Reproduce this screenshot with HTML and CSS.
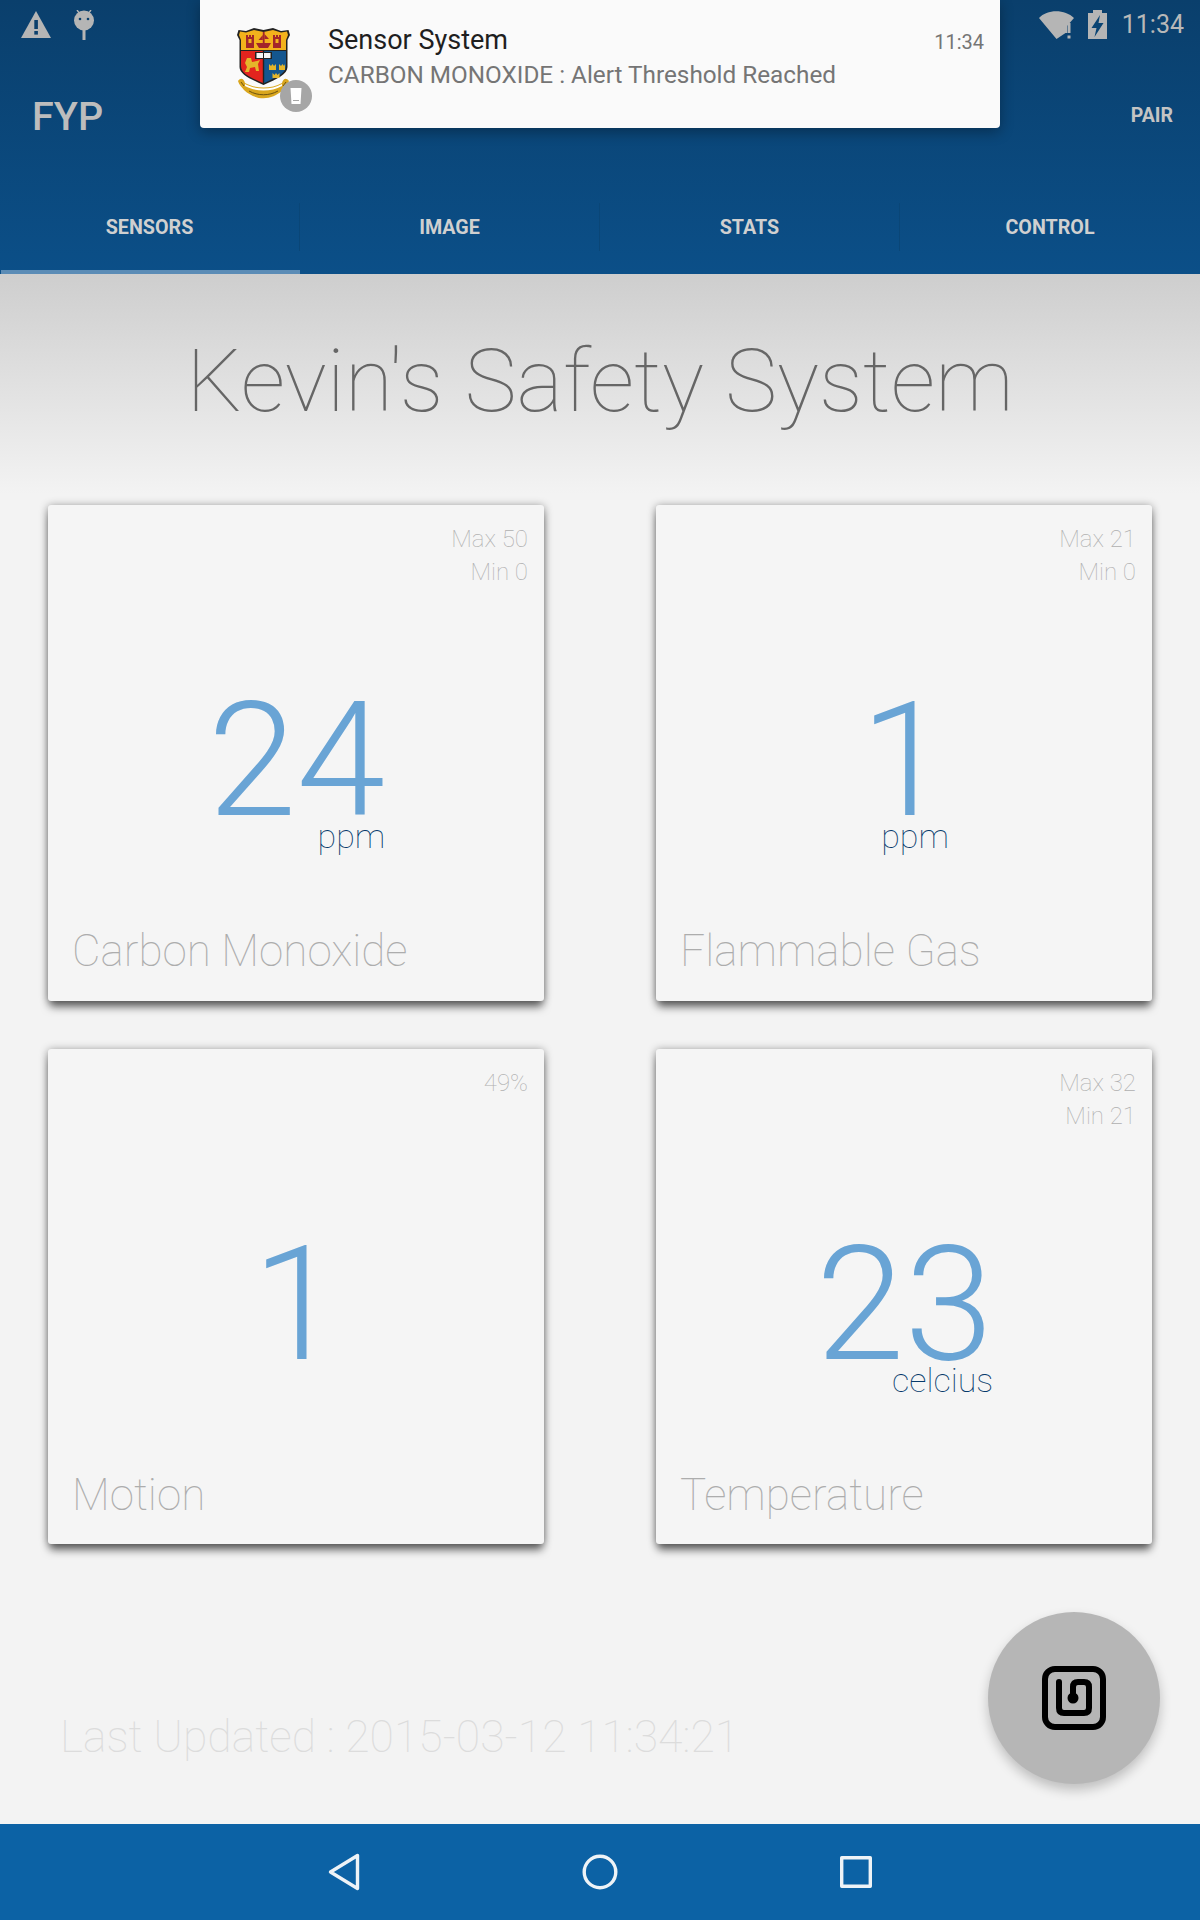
FILE: index.html
```html
<!DOCTYPE html>
<html lang="en">
<head>
<meta charset="utf-8">
<title>FYP</title>
<link rel="stylesheet" href="styles.css">
</head>
<body>
<div class="screen">
  <header class="header">
    <div class="status">
      <div class="status-group">
        <svg class="ic-warn" viewBox="0 0 30 27"><path d="M15 0 30 27H0Z" fill="#b5b5b5"/><rect x="13.3" y="9" width="3.6" height="9" fill="#0a3f6c"/><rect x="13.3" y="20" width="3.6" height="3.6" fill="#0a3f6c"/></svg>
        <svg class="ic-droid" viewBox="0 0 20 30"><path d="M3 0 6 4M17 0 14 4" stroke="#b5b5b5" stroke-width="1.4"/><circle cx="10" cy="10.500" r="10" fill="#b5b5b5"/><circle cx="6" cy="9" r="1.3" fill="#0a3f6c"/><circle cx="14" cy="9" r="1.3" fill="#0a3f6c"/><rect x="8.500" y="20" width="3" height="10" fill="#b5b5b5"/></svg>
      </div>
      <div class="status-group status-right">
        <svg class="ic-wifi" viewBox="0 0 35 28"><path d="M0 7C8-2 26-2 35 7L28 15V22H26.500L17.500 28Z" fill="#b5b5b5"/><rect x="28.500" y="12" width="3" height="10" fill="#b5b5b5"/><rect x="28.500" y="24.500" width="3" height="3" fill="#b5b5b5"/></svg>
        <svg class="ic-batt" viewBox="0 0 19 29"><path d="M5 0H14V3H19V29H0V3H5Z" fill="#b5b5b5"/><path d="M12 5 3.500 18H8.500L6.500 27 15.500 13H10.500Z" fill="#0a4473"/></svg>
        <span class="clock">11:34</span>
      </div>
    </div>
    <div class="appbar">
      <span class="brand">FYP</span>
      <span class="pair">PAIR</span>
    </div>
    <nav class="tabs">
      <div class="tab tab-active"><span>SENSORS</span></div>
      <div class="tab"><span>IMAGE</span></div>
      <div class="tab"><span>STATS</span></div>
      <div class="tab"><span>CONTROL</span></div>
    </nav>
  </header>

  <aside class="notice">
    <div class="crest">
      <svg class="crest-svg" viewBox="0 0 53 72">
        <path d="M1.500 3 9 4 17 1 26.500 3 36 1 44 4 51.500 3 53 8 50.500 13V40C50.500 47 40 52 26.500 58 13 52 2.500 47 2.500 40V13L0 8Z" fill="#222"/>
        <path d="M3 4.500 9 5.500 17 3 26.500 5 36 3 44 5.500 50 4.500 51 8 49 13V23H4V13L2 8Z" fill="#f3b21c"/>
        <path d="M4 24H25.800V56C15 51 4 47 4 39Z" fill="#e3241e"/>
        <path d="M27.200 24H49V39C49 47 38 51 27.200 56Z" fill="#14568f"/>
        <path d="M9 8H11V10H12V8H14V10H15V8H17V21H9ZM36 8H38V10H39V8H41V10H42V8H44V21H36Z" fill="#a3262a"/>
        <path d="M11.500 12H14.500V16H11.500ZM38.500 12H41.500V16H38.500Z" fill="#f3b21c"/>
        <path d="M19 16H34L31 21H22Z" fill="#a3262a"/><rect x="25.800" y="5" width="1.800" height="11" fill="#a3262a"/><path d="M27.500 7 32 12H27.500ZM25.800 8 21.500 13H25.800Z" fill="#a3262a"/>
        <rect x="18" y="25" width="17" height="7" fill="#222"/><rect x="19.500" y="26" width="6.500" height="5" fill="#f6f6f6"/><rect x="27" y="26" width="6.500" height="5" fill="#f6f6f6"/>
        <path d="M8 36 10 31 14 31 15 35 20 34 23 33 21 37 22 44 19 44 18 40 13 41 12 45 8 45 10 40Z" fill="#e5b62a"/>
        <path d="M32 37 34 39 35.500 37 37 39 39 37V43H32ZM42 37 44 39 45.500 37 47 39 48 37V43H42ZM35.500 46 37.500 48 39 46 40.500 48 42.500 46V51H35.500Z" fill="#e5b62a"/>
        <path d="M1 54C4 50 7 52 8 56 19 62 34 62 45 56 46 52 49 50 52 54 51 58 48 60 46 63 34 74 19 74 7 63 5 60 2 58 1 54Z" fill="#d9a61e"/>
        <path d="M8 57C19 63 34 63 45 57L45 59C34 65 19 65 8 59Z" fill="#fff"/>
        <path d="M4 55 7 59M49 55 46 59M12 64C21 69 32 69 41 64" stroke="#6b5210" stroke-width="1" fill="none"/>
      </svg>
      <span class="crest-badge"><svg class="badge-svg" viewBox="0 0 12 18"><path d="M0.500 1H11.500L10.500 17H1.500Z" fill="#fff"/><rect x="3" y="13" width="6" height="1" fill="#a6a6a6"/></svg></span>
    </div>
    <div class="notice-text">
      <div class="notice-title">Sensor System</div>
      <div class="notice-body">CARBON MONOXIDE : Alert Threshold Reached</div>
    </div>
    <div class="notice-time">11:34</div>
  </aside>

  <main class="main">
    <h1 class="title">Kevin's Safety System</h1>
    <section class="grid">
      <article class="card">
        <div class="meta">Max 50<br>Min 0</div>
        <div class="reading"><div class="reading-box"><span class="value">24</span><span class="unit">ppm</span></div></div>
        <div class="label">Carbon Monoxide</div>
      </article>
      <article class="card">
        <div class="meta">Max 21<br>Min 0</div>
        <div class="reading"><div class="reading-box"><span class="value">1</span><span class="unit">ppm</span></div></div>
        <div class="label">Flammable Gas</div>
      </article>
      <article class="card">
        <div class="meta">49%</div>
        <div class="reading reading-solo"><div class="reading-box"><span class="value">1</span></div></div>
        <div class="label">Motion</div>
      </article>
      <article class="card">
        <div class="meta">Max 32<br>Min 21</div>
        <div class="reading"><div class="reading-box"><span class="value">23</span><span class="unit">celcius</span></div></div>
        <div class="label">Temperature</div>
      </article>
    </section>
    <div class="updated">Last Updated : 2015-03-12 11:34:21</div>
    <button class="fab" type="button" aria-label="NFC">
      <svg class="fab-icon" viewBox="0 0 64 64" fill="none" stroke="#000" stroke-width="6" stroke-linecap="round" stroke-linejoin="round"><rect x="3" y="3" width="58" height="58" rx="10"/><path d="M17 16V42Q17 47 22 47H42Q47 47 47 42V21Q47 16 42 16H36Q31 16 31 21V32"/><circle cx="31" cy="32" r="5.500" fill="#000" stroke="none"/></svg>
    </button>
  </main>

  <footer class="navbar">
    <svg class="nav-back" viewBox="0 0 32 38" fill="none" stroke="#eef3f7" stroke-width="3.400" stroke-linejoin="round"><path d="M29.500 2.500V35.500L2.500 19Z"/></svg>
    <svg class="nav-home" viewBox="0 0 36 36" fill="none" stroke="#eef3f7" stroke-width="3.400"><circle cx="18" cy="18" r="15.800"/></svg>
    <svg class="nav-recent" viewBox="0 0 32 32" fill="none" stroke="#eef3f7" stroke-width="3.400" stroke-linejoin="round"><rect x="1.700" y="1.700" width="28.600" height="28.600"/></svg>
  </footer>
</div>
</body>
</html>
```

FILE: styles.css
```css
* { box-sizing: border-box; }
html, body { margin: 0; padding: 0; }
body { font-family: Roboto, "Liberation Sans", sans-serif; background: #f3f3f3; }
.screen { position: relative; width: 1200px; height: 1920px; display: flex; flex-direction: column; overflow: hidden; }

.header { height: 274px; background: linear-gradient(180deg, #0a3f6c 0%, #0b4f88 100%); display: flex; flex-direction: column; flex: none; }
.status { height: 50px; display: flex; justify-content: space-between; align-items: flex-start; padding: 10px 16px 0 21px; }
.status-group { display: flex; align-items: flex-start; }
.ic-warn { width: 30px; height: 27px; margin-top: 1px; }
.ic-droid { width: 20px; height: 30px; margin-left: 23px; }
.status-right { align-items: flex-start; }
.ic-wifi { width: 35px; height: 28px; margin-top: 1px; }
.ic-batt { width: 19px; height: 29px; margin-left: 14px; }
.clock { font-size: 25px; line-height: 30px; color: #b8b8b8; margin-left: 15px; }

.appbar { height: 130px; display: flex; justify-content: space-between; align-items: flex-start; padding: 0 27px 0 32px; }
.brand { font-size: 39.500px; line-height: 66px; font-weight: 500; color: #bdbdbd; margin-top: 34px; }
.pair { font-size: 19.500px; line-height: 32px; font-weight: 700; color: #c4c4c4; margin-top: 50px; }

.tabs { flex: 1; display: grid; grid-template-columns: repeat(4, 300px); }
.tab { display: flex; align-items: flex-start; justify-content: center; position: relative; padding-top: 23px; }
.tab span { display: block; width: 100%; height: 48px; line-height: 50px; text-align: center; font-size: 19.700px; font-weight: 700; color: #d0d0d0; border-right: 1px solid #0a4677; }
.tab:last-child span { border-right: 0; }
.tab-active::after { content: ""; position: absolute; left: 1px; right: 0; bottom: 0; height: 4px; background: #5b8cb6; }

.notice { position: absolute; left: 200px; top: 0; width: 800px; height: 128px; background: #fafafa; border-radius: 0 0 4px 4px; box-shadow: 0 4px 14px rgba(0,0,0,.32); display: flex; padding: 0 16px 0 37px; }
.crest { position: relative; width: 53px; height: 72px; margin-top: 27px; flex: none; }
.crest-svg { display: block; width: 53px; height: 72px; }
.crest-badge { position: absolute; left: 43px; top: 53px; width: 32px; height: 32px; border-radius: 50%; background: #a6a6a6; display: flex; align-items: center; justify-content: center; }
.badge-svg { width: 12px; height: 18px; }
.notice-text { margin-left: 38px; padding-top: 22px; flex: 1; }
.notice-title { font-size: 27px; line-height: 36px; color: #1f1f1f; }
.notice-body { font-size: 24.300px; line-height: 34px; color: #757575; }
.notice-time { font-size: 20px; line-height: 28px; color: #757575; margin-top: 28px; }

.main { position: relative; flex: 1; display: flex; flex-direction: column; background: linear-gradient(180deg, #cecece 0, #f3f3f3 220px); }
.title { margin: 0; height: 231px; display: flex; align-items: center; justify-content: center; padding-bottom: 18px; font-size: 88px; font-weight: 100; color: #666; white-space: nowrap; }
.grid { display: grid; grid-template-columns: repeat(2, 496px); grid-template-rows: 496px 495px; column-gap: 112px; row-gap: 48px; padding-left: 48px; }
.card { background: #f5f5f5; border-radius: 3px; box-shadow: 0 1px 8px rgba(0,0,0,.42), 0 8px 8px -2px rgba(0,0,0,.5); display: flex; flex-direction: column; padding: 18px 16px 0 25px; }
.meta { height: 66px; font-size: 24px; line-height: 33px; font-weight: 100; color: #b0b0b0; text-align: right; }
.reading { display: flex; justify-content: center; margin-top: 112px; height: 221px; }
.reading-box { display: inline-flex; flex-direction: column; align-items: flex-end; margin-right: 8px; }
.value { font-size: 160px; line-height: 120px; font-weight: 300; color: #69a4d5; display: block; }
.unit { font-size: 34px; line-height: 34px; font-weight: 100; color: #063a6b; margin-top: -2px; }
.label { font-size: 44px; line-height: 56px; font-weight: 100; color: #adadad; margin-top: 1px; margin-left: -1px; }

.updated { font-size: 44.500px; line-height: 56px; font-weight: 100; color: #dcdcdc; padding-left: 60px; margin-top: 165px; }
.fab { position: absolute; left: 988px; top: 1338px; width: 172px; height: 172px; border: 0; padding: 0; border-radius: 50%; background: #b6b6b6; box-shadow: 0 6px 12px rgba(0,0,0,.22); display: flex; align-items: center; justify-content: center; }
.fab-icon { width: 64px; height: 64px; }

.navbar { height: 96px; flex: none; background: #0c62a5; display: grid; grid-template-columns: 344px 256px 256px; align-items: center; position: relative; }
.nav-back { width: 32px; height: 38px; justify-self: end; margin-right: -16px; }
.nav-home { width: 36px; height: 36px; justify-self: end; margin-right: -18px; }
.nav-recent { width: 32px; height: 32px; justify-self: end; margin-right: -16px; }
```
